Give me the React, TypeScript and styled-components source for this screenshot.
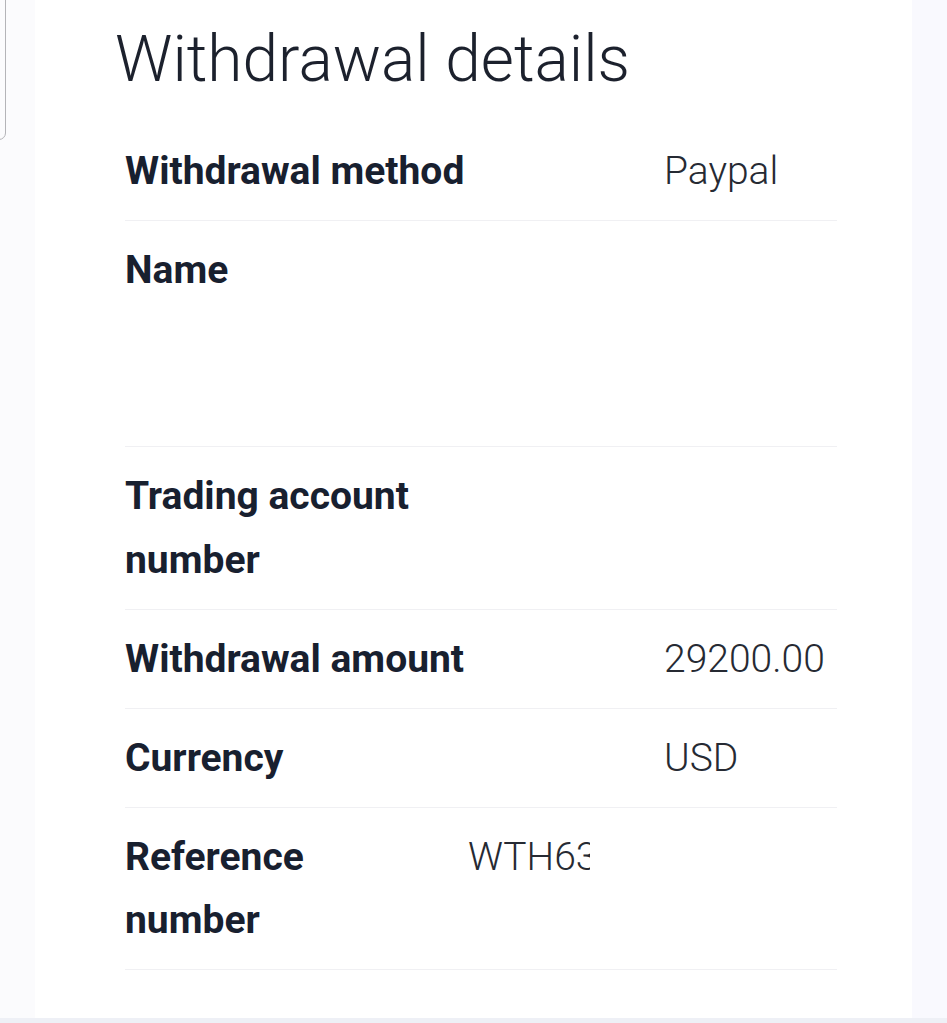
import React from "react";
import styled, { createGlobalStyle } from "styled-components";

const Global = createGlobalStyle`
  html, body { margin: 0; padding: 0; background: #fafafd; }
  body { font-family: Roboto, "Liberation Sans", sans-serif; }
`;

const Page = styled.div`
  position: relative;
  width: 947px;
  height: 1023px;
  display: flex;
  flex-direction: column;
  overflow: hidden;
  background: #fafafd;
`;

const Main = styled.div`
  flex: 1;
  display: flex;
`;

const Gutter = styled.div<{ $w: number; $bg: string }>`
  flex: 0 0 ${(p) => p.$w}px;
  background: ${(p) => p.$bg};
`;

const Card = styled.div`
  flex: 1;
  background: #ffffff;
  padding: 21px 75px 0 80px;
  box-sizing: border-box;
`;

const BottomBar = styled.div`
  flex: 0 0 5px;
  background: #eef0f6;
`;

const EdgeBox = styled.div`
  position: absolute;
  left: -100px;
  top: -10px;
  width: 106px;
  height: 150px;
  box-sizing: border-box;
  border: 1.5px solid #b4b4b8;
  border-radius: 7px;
  background: transparent;
`;

const Title = styled.h1`
  margin: 0;
  font-family: Roboto, "Liberation Sans", sans-serif;
  font-weight: 300;
  font-size: 64px;
  line-height: 77px;
  color: #1c212d;
  letter-spacing: 0;
`;

const List = styled.div`
  margin: 24px 0 0 10px;
  display: flex;
  flex-direction: column;
`;

const Row = styled.div`
  display: flex;
  align-items: flex-start;
  padding: 18px 0 16.5px;
  border-bottom: 1px solid #f0f0f3;
`;

const Label = styled.div<{ $w: number }>`
  flex: 0 0 ${(p) => p.$w}px;
  box-sizing: border-box;
  padding-right: 40px;
  font-weight: 700;
  font-size: 39px;
  line-height: 63.5px;
  color: #18202f;
`;

const Value = styled.div<{ $lines?: number }>`
  flex: 1;
  min-height: ${(p) => (p.$lines ?? 1) * 63.5}px;
  font-weight: 300;
  font-size: 39px;
  line-height: 63.5px;
  color: #262a33;
`;

const Clip = styled.span<{ $w: number }>`
  display: inline-block;
  vertical-align: top;
  width: ${(p) => p.$w}px;
  overflow: hidden;
  white-space: nowrap;
`;

export default function App() {
  return (
    <Page>
      <Global />
      <EdgeBox />
      <Main>
        <Gutter $w={35} $bg="#fbfbfd" />
        <Card>
          <Title>Withdrawal details</Title>
          <List>
            <Row>
              <Label $w={539}>Withdrawal method</Label>
              <Value>Paypal</Value>
            </Row>
            <Row>
              <Label $w={539}>Name</Label>
              <Value $lines={3}></Value>
            </Row>
            <Row>
              <Label $w={420}>Trading account number</Label>
              <Value></Value>
            </Row>
            <Row>
              <Label $w={539}>Withdrawal amount</Label>
              <Value>29200.00</Value>
            </Row>
            <Row>
              <Label $w={539}>Currency</Label>
              <Value>USD</Value>
            </Row>
            <Row>
              <Label $w={343}>Reference number</Label>
              <Value>
                <Clip $w={122}>WTH63</Clip>
              </Value>
            </Row>
          </List>
        </Card>
        <Gutter $w={35} $bg="#f9f9fe" />
      </Main>
      <BottomBar />
    </Page>
  );
}
